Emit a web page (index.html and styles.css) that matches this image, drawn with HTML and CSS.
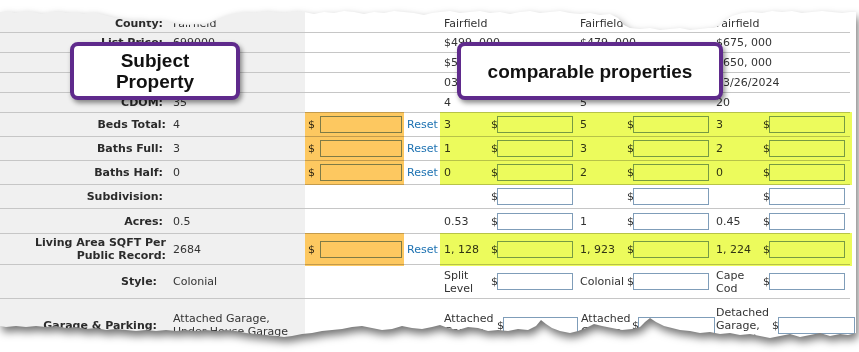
FILE: index.html
```html
<!DOCTYPE html>
<html lang="en">
<head>
<meta charset="utf-8">
<title>Comparable properties</title>
<link rel="stylesheet" href="styles.css">
</head>
<body>
<div class="paper">
  <div class="sheet">
    <div class="row row-top">
      <div class="lbl">County:</div><div class="val">Fairfield</div><div class="adj"></div><div class="rst"></div>
      <div class="cv span2">Fairfield</div><div class="cv span2">Fairfield</div><div class="cv span2">Fairfield</div>
    </div>
    <div class="row row-s">
      <div class="lbl">List Price:</div><div class="val">699000</div><div class="adj"></div><div class="rst"></div>
      <div class="cv span2">$499, 000</div><div class="cv span2">$479, 000</div><div class="cv span2">$675, 000</div>
    </div>
    <div class="row row-s">
      <div class="lbl">Sold Price:</div><div class="val"></div><div class="adj"></div><div class="rst"></div>
      <div class="cv span2">$515, 000</div><div class="cv span2">$485, 000</div><div class="cv span2">$650, 000</div>
    </div>
    <div class="row row-s">
      <div class="lbl">Close Date:</div><div class="val"></div><div class="adj"></div><div class="rst"></div>
      <div class="cv span2">03/15/2024</div><div class="cv span2">03/08/2024</div><div class="cv span2">03/26/2024</div>
    </div>
    <div class="row row-s">
      <div class="lbl">CDOM:</div><div class="val">35</div><div class="adj"></div><div class="rst"></div>
      <div class="cv span2">4</div><div class="cv span2">5</div><div class="cv span2">20</div>
    </div>

    <div class="hl-group">
      <div class="row row-m">
        <div class="lbl lbl-r">Beds Total:</div><div class="val">4</div>
        <div class="adj"><span class="cur">$</span><input class="in in-adj" type="text"></div><div class="rst">Reset</div>
        <div class="cv">3</div><div class="ca"><span class="cur">$</span><input class="in" type="text"></div>
        <div class="cv">5</div><div class="ca"><span class="cur">$</span><input class="in" type="text"></div>
        <div class="cv">3</div><div class="ca"><span class="cur">$</span><input class="in" type="text"></div>
      </div>
      <div class="row row-m">
        <div class="lbl">Baths Full:</div><div class="val">3</div>
        <div class="adj"><span class="cur">$</span><input class="in in-adj" type="text"></div><div class="rst">Reset</div>
        <div class="cv">1</div><div class="ca"><span class="cur">$</span><input class="in" type="text"></div>
        <div class="cv">3</div><div class="ca"><span class="cur">$</span><input class="in" type="text"></div>
        <div class="cv">2</div><div class="ca"><span class="cur">$</span><input class="in" type="text"></div>
      </div>
      <div class="row row-m">
        <div class="lbl">Baths Half:</div><div class="val">0</div>
        <div class="adj"><span class="cur">$</span><input class="in in-adj" type="text"></div><div class="rst">Reset</div>
        <div class="cv">0</div><div class="ca"><span class="cur">$</span><input class="in" type="text"></div>
        <div class="cv">2</div><div class="ca"><span class="cur">$</span><input class="in" type="text"></div>
        <div class="cv">0</div><div class="ca"><span class="cur">$</span><input class="in" type="text"></div>
      </div>
      <span class="hl hl-orange"></span>
      <span class="hl hl-yellow"></span>
    </div>

    <div class="row row-m">
      <div class="lbl">Subdivision:</div><div class="val"></div><div class="adj"></div><div class="rst"></div>
      <div class="cv"></div><div class="ca"><span class="cur">$</span><input class="in" type="text"></div>
      <div class="cv"></div><div class="ca"><span class="cur">$</span><input class="in" type="text"></div>
      <div class="cv"></div><div class="ca"><span class="cur">$</span><input class="in" type="text"></div>
    </div>
    <div class="row row-a">
      <div class="lbl">Acres:</div><div class="val">0.5</div><div class="adj"></div><div class="rst"></div>
      <div class="cv">0.53</div><div class="ca"><span class="cur">$</span><input class="in" type="text"></div>
      <div class="cv">1</div><div class="ca"><span class="cur">$</span><input class="in" type="text"></div>
      <div class="cv">0.45</div><div class="ca"><span class="cur">$</span><input class="in" type="text"></div>
    </div>

    <div class="hl-group hl-group-l">
      <div class="row row-l">
        <div class="lbl lbl-r">Living Area SQFT Per Public Record:</div><div class="val">2684</div>
        <div class="adj"><span class="cur">$</span><input class="in in-adj" type="text"></div><div class="rst">Reset</div>
        <div class="cv nw">1, 128</div><div class="ca"><span class="cur">$</span><input class="in" type="text"></div>
        <div class="cv nw">1, 923</div><div class="ca"><span class="cur">$</span><input class="in" type="text"></div>
        <div class="cv nw">1, 224</div><div class="ca"><span class="cur">$</span><input class="in" type="text"></div>
      </div>
      <span class="hl hl-orange"></span>
      <span class="hl hl-yellow"></span>
    </div>

    <div class="row row-st">
      <div class="lbl lbl-n">Style:</div><div class="val">Colonial</div><div class="adj"></div><div class="rst"></div>
      <div class="cv">Split Level</div><div class="ca"><span class="cur">$</span><input class="in" type="text"></div>
      <div class="cv">Colonial</div><div class="ca"><span class="cur">$</span><input class="in" type="text"></div>
      <div class="cv">Cape Cod</div><div class="ca"><span class="cur">$</span><input class="in" type="text"></div>
    </div>
    <div class="row row-g">
      <div class="lbl lbl-n">Garage &amp; Parking:</div><div class="val">Attached Garage, Under House Garage</div><div class="adj"></div><div class="rst"></div>
      <div class="cv">Attached Garage</div><div class="ca"><span class="cur">$</span><input class="in" type="text"></div>
      <div class="cv">Attached Garage</div><div class="ca"><span class="cur">$</span><input class="in in-w" type="text"></div>
      <div class="cv">Detached Garage, Carport</div><div class="ca"><span class="cur">$</span><input class="in in-w" type="text"></div>
    </div>

    <div class="callout callout-subject">Subject<br>Property</div>
    <div class="callout callout-comps">comparable properties</div>
  </div>
</div>
</body>
</html>
```

FILE: styles.css
```css
html, body {
  margin: 0;
  padding: 0;
  background: #ffffff;
}

body {
  width: 859px;
  height: 352px;
  overflow: hidden;
  font-family: "DejaVu Sans", Verdana, sans-serif;
  font-size: 11px;
  line-height: 13px;
  color: #333333;
}

.paper {
  width: 856px;
  filter: drop-shadow(2px 5px 4px rgba(0, 0, 0, 0.55));
}

.sheet {
  position: relative;
  width: 856px;
  height: 351px;
  background: #ffffff;
  clip-path: polygon(
    0 12px, 8px 11px, 15px 13px, 24px 11px, 33px 12px, 42px 14px, 50px 12px, 58px 11px, 66px 13px, 75px 12px,
    84px 14px, 92px 12px, 100px 14px, 108px 16px, 116px 18px, 124px 19px, 132px 20px, 140px 19px, 148px 21px,
    156px 20px, 164px 21px, 172px 23px, 180px 24px, 188px 25px, 196px 24px, 204px 25px, 212px 22px, 220px 18px,
    228px 15px, 236px 13px, 244px 12px, 254px 13px, 264px 11px, 274px 12px, 284px 13px, 294px 11px, 304px 12px,
    314px 14px, 324px 12px, 334px 13px, 344px 11px, 354px 12px, 364px 14px, 374px 12px, 384px 13px, 394px 11px,
    404px 12px, 414px 13px, 424px 15px, 432px 13px, 440px 12px, 450px 11px, 460px 13px, 470px 12px, 480px 11px,
    490px 13px, 500px 12px, 510px 14px, 520px 12px, 530px 11px, 540px 13px, 550px 12px, 560px 11px, 570px 13px,
    580px 14px, 590px 13px, 600px 15px, 610px 14px, 618px 18px, 624px 25px, 630px 28px, 640px 29px, 650px 28px,
    660px 30px, 670px 29px, 680px 28px, 690px 30px, 700px 29px, 708px 28px, 714px 28px, 719px 26px, 724px 21px,
    732px 16px, 742px 13px, 752px 12px, 762px 13px, 772px 11px, 782px 12px, 792px 11px, 802px 13px, 812px 12px,
    822px 11px, 832px 12px, 842px 13px, 850px 12px, 856px 12px,
    856px 333px, 848px 335px, 840px 334px, 830px 336px, 820px 333px, 810px 335px, 800px 337px, 790px 334px,
    780px 336px, 770px 338px, 760px 336px, 750px 334px, 740px 335px, 730px 333px, 720px 334px, 710px 332px,
    700px 333px, 690px 331px, 680px 330px, 672px 328px, 664px 326px, 656px 322px, 650px 318px, 645px 322px,
    640px 327px, 632px 329px, 622px 330px, 612px 328px, 602px 326px, 594px 324px, 586px 328px, 578px 331px,
    570px 333px, 560px 331px, 552px 328px, 546px 324px, 541px 320px, 536px 326px, 528px 330px, 518px 329px,
    508px 331px, 498px 330px, 488px 331px, 478px 328px, 468px 327px, 458px 330px, 448px 328px, 440px 325px,
    432px 327px, 422px 329px, 412px 328px, 402px 326px, 392px 329px, 382px 330px, 372px 328px, 362px 326px,
    352px 327px, 342px 329px, 332px 330px, 322px 331px, 312px 333px, 302px 334px, 292px 336px, 284px 337px,
    276px 336px, 266px 335px, 256px 334px, 246px 333px, 236px 331px, 226px 330px, 216px 331px, 206px 330px,
    196px 331px, 186px 330px, 176px 331px, 166px 330px, 156px 331px, 146px 330px, 136px 331px, 126px 330px,
    116px 329px, 106px 330px, 96px 328px, 86px 329px, 76px 327px, 66px 328px, 56px 326px, 46px 327px,
    36px 326px, 26px 327px, 16px 326px, 6px 327px, 0 326px
  );
}

/* ---------- rows ---------- */
.row {
  display: grid;
  grid-template-columns: 168px 137px 99px 36px 47px 89px 47px 89px 47px 91px;
  width: 850px;
  box-sizing: border-box;
  border-bottom: 1px solid #c6c6c6;
}

.row > div {
  display: flex;
  align-items: center;
  min-width: 0;
}

.row-top { height: 33px; }
.row-top > div { align-items: flex-end; padding-bottom: 2px; }
.row-s { height: 20px; }
.row-m { height: 24px; }
.row-a { height: 25px; }
.row-l { height: 31px; }
.row-st { height: 34px; }

.row-g {
  height: 52px;
  width: 857px;
  border-bottom: none;
  grid-template-columns: 168px 137px 99px 36px 56px 82px 53px 82px 58px 86px;
}

/* ---------- cells ---------- */
.lbl {
  background: #f0f0f0;
  justify-content: flex-end;
  text-align: right;
  padding-right: 5px;
  font-weight: bold;
  color: #2b2b2b;
}
.row > .lbl-r { padding-right: 2px; }
.row > .lbl-n { padding-right: 11px; }

.val {
  background: #f0f0f0;
  padding-left: 5px;
}

.adj { padding-left: 3px; }

.rst {
  padding-left: 3px;
  color: #1e72b2;
}

.cv { padding-left: 4px; }
.ca { padding-left: 4px; }

.row-g .cv { padding-left: 3px; }
.row-g .cv:nth-child(5) { padding-left: 4px; }
.row-g .ca { padding-left: 1px; }

.span2 {
  grid-column: span 2;
  white-space: nowrap;
}

.nw { white-space: nowrap; }

.cur { flex: none; }

.in {
  flex: none;
  box-sizing: border-box;
  width: 76px;
  height: 17px;
  margin: 0 0 0 -1px;
  padding: 0;
  border: 1px solid #7f9db9;
  border-radius: 0;
  background: #ffffff;
  font: 11px "DejaVu Sans", sans-serif;
}

.in-adj {
  width: 82px;
  margin-left: 5px;
}

.row-g .in { width: 75px; }
.row-g .in-w { width: 77px; }

/* ---------- highlighter marks ---------- */
.hl-group { position: relative; }

.hl {
  position: absolute;
  top: -1px;
  bottom: 0;
  mix-blend-mode: multiply;
  pointer-events: none;
}

.hl-group-l .hl { bottom: -1px; }

.hl-orange {
  left: 305px;
  width: 99px;
  background: #fdc860;
}

.hl-yellow {
  left: 440px;
  width: 412px;
  background: #ecfb5c;
}

/* ---------- callouts ---------- */
.callout {
  position: absolute;
  top: 42px;
  height: 58px;
  box-sizing: border-box;
  border: 4px solid #5f2a8c;
  border-radius: 8px;
  background: #ffffff;
  box-shadow: 2px 3px 5px rgba(0, 0, 0, 0.45);
  display: flex;
  align-items: center;
  justify-content: center;
  text-align: center;
  font-family: "Liberation Sans", Arial, sans-serif;
  font-weight: bold;
  font-size: 19px;
  line-height: 21px;
  color: #111111;
}

.callout-subject {
  left: 70px;
  width: 170px;
}

.callout-comps {
  left: 457px;
  width: 266px;
}
```
